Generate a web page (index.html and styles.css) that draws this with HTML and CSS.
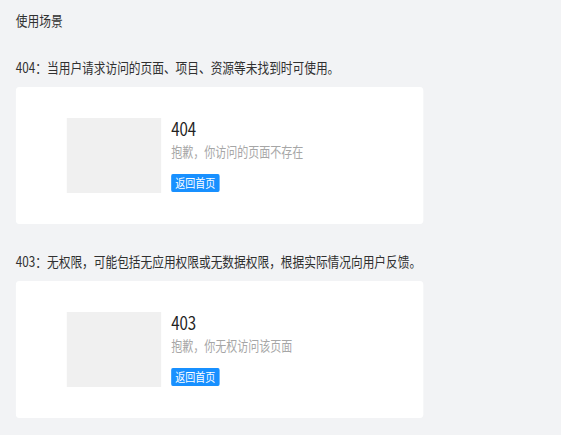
FILE: index.html
```html
<!DOCTYPE html>
<html lang="zh-CN">
<head>
<meta charset="utf-8">
<title>使用场景</title>
<link rel="stylesheet" href="styles.css">
</head>
<body>
<main class="stage">
  <h2 class="heading">使用场景</h2>

  <section class="scene">
    <p class="scene-desc">404：当用户请求访问的页面、项目、资源等未找到时可使用。</p>
    <div class="card">
      <div class="result">
        <div class="result-img"></div>
        <div class="result-body">
          <div class="result-title">404</div>
          <div class="result-sub">抱歉，你访问的页面不存在</div>
          <button class="btn" type="button">返回首页</button>
        </div>
      </div>
    </div>
  </section>

  <section class="scene">
    <p class="scene-desc">403：无权限，可能包括无应用权限或无数据权限，根据实际情况向用户反馈。</p>
    <div class="card">
      <div class="result">
        <div class="result-img"></div>
        <div class="result-body">
          <div class="result-title">403</div>
          <div class="result-sub">抱歉，你无权访问该页面</div>
          <button class="btn" type="button">返回首页</button>
        </div>
      </div>
    </div>
  </section>
</main>
</body>
</html>
```

FILE: styles.css
```css
html, body {
  margin: 0;
  padding: 0;
  background: #f2f3f5;
  overflow: hidden;
}

body {
  font-family: "Noto Sans CJK SC", "Noto Sans", sans-serif;
  color: #333;
}

.stage {
  box-sizing: border-box;
  padding: 9px 19px 0;
  transform: scaleX(0.835);
  transform-origin: 0 0;
}

.heading {
  margin: 0;
  font-size: 14px;
  font-weight: 400;
  line-height: 22px;
  color: #303030;
}

.scene-desc {
  margin: 25px 0 0;
  font-size: 14px;
  line-height: 22px;
  color: #303030;
}

.scene + .scene .scene-desc {
  margin-top: 26px;
}

.card {
  margin-top: 9px;
  width: 488px;
  height: 137px;
  box-sizing: border-box;
  background: #fff;
  border-radius: 4px;
  padding: 31px 0 0 61px;
}

.result {
  display: flex;
  gap: 12px;
}

.result-img {
  width: 113px;
  height: 75px;
  background: #f0f0f0;
  flex: none;
}

.result-body {
  display: flex;
  flex-direction: column;
  align-items: flex-start;
}

.result-title {
  font-size: 18px;
  line-height: 20px;
  color: #222;
}

.result-sub {
  margin-top: 4px;
  font-size: 13.2px;
  line-height: 20px;
  color: #a6a6a6;
}

.btn {
  margin-top: 12px;
  width: 57.5px;
  height: 18px;
  padding: 0;
  border: 0;
  border-radius: 2px;
  background: #1890ff;
  color: #fff;
  font-family: inherit;
  font-size: 12px;
  line-height: 18px;
  text-align: center;
}
```
